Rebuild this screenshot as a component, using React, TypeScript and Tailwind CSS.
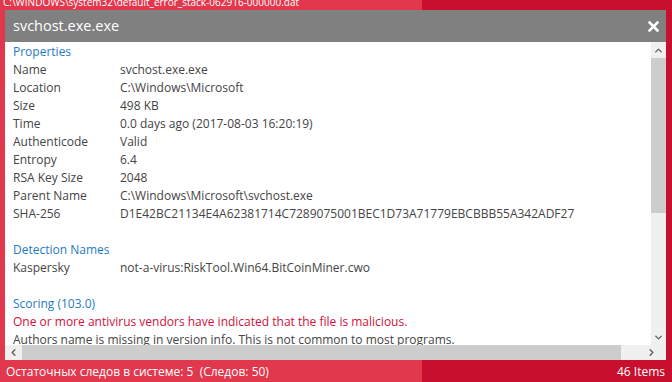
import { ChevronUp, ChevronDown, ChevronLeft, ChevronRight } from "lucide-react";

const PROPS: Array<[string, string]> = [
  ["Name", "svchost.exe.exe"],
  ["Location", "C:\\Windows\\Microsoft"],
  ["Size", "498 KB"],
  ["Time", "0.0 days ago (2017-08-03 16:20:19)"],
  ["Authenticode", "Valid"],
  ["Entropy", "6.4"],
  ["RSA Key Size", "2048"],
  ["Parent Name", "C:\\Windows\\Microsoft\\svchost.exe"],
  ["SHA-256", "D1E42BC21134E4A62381714C7289075001BEC1D73A71779EBCBBB55A342ADF27"],
];

function Row({ label, value }: { label: string; value: string }) {
  return (
    <div className="flex h-[18px] items-center whitespace-nowrap">
      <span className="w-[107px] shrink-0">{label}</span>
      <span>{value}</span>
    </div>
  );
}

function Heading({ children }: { children: string }) {
  return <div className="flex h-[18px] items-center text-[#1f7ac4]">{children}</div>;
}

export default function App() {
  return (
    <div
      className="flex h-[382px] w-[672px] flex-col overflow-hidden bg-[linear-gradient(to_right,#e2384d_422px,#c8102e_422px)] text-[12px] text-[#444]"
      style={{ fontFamily: '"Open Sans", "Noto Sans", sans-serif' }}
    >
      {/* path of the selected item, cut off by the dialog */}
      <div className="h-[10px] shrink-0 overflow-hidden pl-[3px]">
        <div className="mt-[-6px] text-[10px] leading-[16px] text-white whitespace-nowrap">
          C:\WINDOWS\system32\default_error_stack-062916-000000.dat
        </div>
      </div>

      {/* Dialog */}
      <div className="ml-[5px] flex h-[350px] w-[661px] shrink-0 flex-col">
        <div className="flex h-[32px] shrink-0 items-center justify-between bg-[#808080] pl-[8px] pr-[7px]">
          <span className="text-[14.5px] text-white">svchost.exe.exe</span>
          <svg width="11" height="11" viewBox="0 0 11 11" className="mt-[1px]">
            <path d="M1.5 1.5 L9.5 9.5 M9.5 1.5 L1.5 9.5" stroke="#fff" strokeWidth="2.6" strokeLinecap="square" />
          </svg>
        </div>

        <div className="flex min-h-0 flex-1">
          <div className="min-w-0 flex-1 overflow-hidden bg-white pl-[8px] pt-[1px]">
            <Heading>Properties</Heading>
            {PROPS.map(([l, v]) => (
              <Row key={l} label={l} value={v} />
            ))}
            <div className="h-[18px]" />
            <Heading>Detection Names</Heading>
            <Row label="Kaspersky" value="not-a-virus:RiskTool.Win64.BitCoinMiner.cwo" />
            <div className="h-[18px]" />
            <Heading>Scoring (103.0)</Heading>
            <div className="flex h-[18px] items-center whitespace-nowrap text-[#d1103c]">
              One or more antivirus vendors have indicated that the file is malicious.
            </div>
            <div className="flex h-[18px] items-center whitespace-nowrap">
              Authors name is missing in version info. This is not common to most programs.
            </div>
          </div>

          {/* vertical scrollbar */}
          <div className="flex w-[15px] shrink-0 flex-col bg-[#f0f0f0]">
            <div className="flex h-[16px] items-center justify-center">
              <ChevronUp size={11} strokeWidth={3} color="#606060" />
            </div>
            <div className="h-[155px] bg-[#cdcdcd]" />
            <div className="flex-1" />
            <div className="flex h-[16px] items-center justify-center">
              <ChevronDown size={11} strokeWidth={3} color="#606060" />
            </div>
          </div>
        </div>

        {/* horizontal scrollbar */}
        <div className="flex h-[15px] shrink-0 bg-[#f0f0f0]">
          <div className="flex w-[17px] items-center justify-center">
            <ChevronLeft size={11} strokeWidth={3} color="#606060" />
          </div>
          <div className="w-[599px] bg-[#cdcdcd]" />
          <div className="flex-1" />
          <div className="flex w-[30px] items-center justify-center">
            <ChevronRight size={11} strokeWidth={3} color="#606060" />
          </div>
        </div>
      </div>

      {/* status bar */}
      <div className="flex flex-1 items-center justify-between pl-[6px] pr-[7px] pt-[2px] text-white whitespace-pre">
        <span>Остаточных следов в системе: 5  (Следов: 50)</span>
        <span>46 Items</span>
      </div>
    </div>
  );
}
